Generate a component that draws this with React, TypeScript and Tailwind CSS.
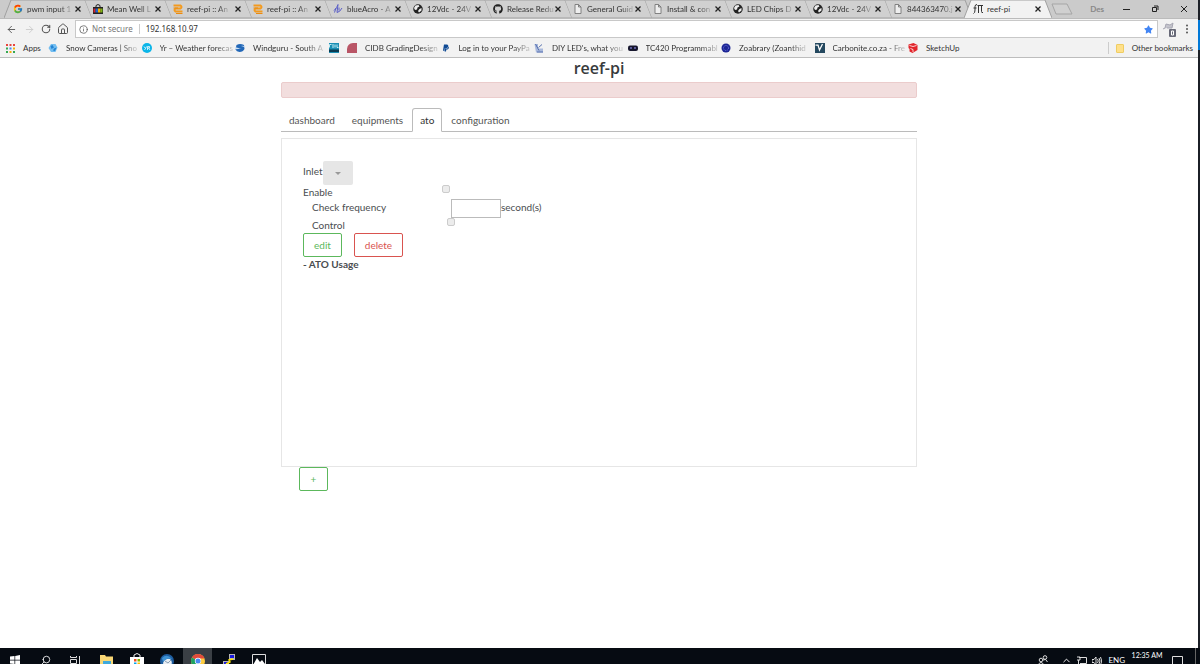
import React, { useState } from 'react';
import { FcGoogle } from 'react-icons/fc';
import { FaGithub, FaPaypal, FaStar } from 'react-icons/fa';
import { ArrowLeft, ArrowRight, ChevronUp, House, Info, RotateCw, Search } from 'lucide-react';

interface BrowserTab {
  title: string;
  icon: React.ReactNode;
}

interface Bookmark {
  title: string;
  icon: React.ReactNode;
}

const GlobeIcon = () => (
  <svg viewBox="0 0 20 20" className="size-full">
    <circle cx="10" cy="10" r="9.5" fill="#222" />
    <path d="M5 3 L11 2 L13 5 L9 7 L8 11 L4 12 L2 8 Z M13 10 L17 8 L17 13 L12 17 L10 14 Z" fill="#eee" />
  </svg>
);

const FileIcon = () => (
  <svg viewBox="0 0 20 20" className="size-full" fill="#eee" stroke="#777" strokeWidth="1.8">
    <path d="M4 1 H11 L16 6 V19 H4 Z M11 1 V6 H16" />
  </svg>
);

const ShopIcon = () => (
  <svg viewBox="0 0 20 20" className="size-full">
    <path d="M6 7 V3 Q10 -1 14 3 V7" fill="none" stroke="#222" strokeWidth="2" />
    <path d="M0 6 H20 V20 H0 Z" fill="#222" />
    <path d="M1 9 H5 V17 H1 Z" fill="#d92027" />
    <path d="M5 9 H10 V17 H5 Z" fill="#2062c9" />
    <path d="M10 9 H15 V17 H10 Z" fill="#f5af02" />
    <path d="M15 9 H19 V17 H15 Z" fill="#7cb518" />
  </svg>
);

const ReefDocsIcon = () => (
  <svg viewBox="0 0 20 20" className="size-full" fill="none">
    <path d="M1 3 H15 Q19 6 15 9 H5 Q1 12 5 15 H19" stroke="#f39a1e" strokeWidth="4" />
    <path d="M1 8 H10 M6 19 H19" stroke="#e98a10" strokeWidth="2" />
  </svg>
);

const AcroIcon = () => (
  <svg viewBox="0 0 20 20" className="size-full" fill="none" stroke="#5b5fc7" strokeWidth="2">
    <path d="M2 13 Q8 8 10 1 L8 17 Q14 16 18 8 M3 17 L6 8 M12 7 L12 13" />
  </svg>
);

const PiIcon = () => (
  <svg viewBox="0 0 20 20" className="size-full" fill="none" stroke="#333" strokeWidth="2">
    <path d="M1 19 Q4 18 4 12 V5 Q4 1 8 1 M1 8 H7 M9 3 H20 M11 3 V18 M17 3 V15 Q17 18 20 17" />
  </svg>
);

const BROWSER_TABS: BrowserTab[] = [
  { title: 'pwm input 1', icon: <FcGoogle className="size-full" /> },
  { title: 'Mean Well L', icon: <ShopIcon /> },
  { title: 'reef-pi :: An', icon: <ReefDocsIcon /> },
  { title: 'reef-pi :: An', icon: <ReefDocsIcon /> },
  { title: 'blueAcro - A', icon: <AcroIcon /> },
  { title: '12Vdc - 24V', icon: <GlobeIcon /> },
  { title: 'Release Redu', icon: <FaGithub className="size-full text-[#222]" /> },
  { title: 'General Guid', icon: <FileIcon /> },
  { title: 'Install & con', icon: <FileIcon /> },
  { title: 'LED Chips D', icon: <GlobeIcon /> },
  { title: '12Vdc - 24V', icon: <GlobeIcon /> },
  { title: '844363470.j', icon: <FileIcon /> },
  { title: 'reef-pi', icon: <PiIcon /> },
];

const BOOKMARKS: Bookmark[] = [
  {
    title: 'Snow Cameras | Sno',
    icon: (
      <svg viewBox="0 0 20 20" className="size-full">
        <path d="M6 2 L15 2 L19 9 L15 18 L6 18 L1 10 Z" fill="#72bdf0" />
        <path d="M5 6 L9 4 L12 9 L7 12 Z M12 11 L17 9 L14 16 L10 15 Z" fill="#2383d3" />
      </svg>
    ),
  },
  {
    title: 'Yr – Weather forecas',
    icon: (
      <svg viewBox="0 0 20 20" className="size-full">
        <circle cx="10" cy="10" r="10" fill="#0bb5e8" />
        <path d="M4 7 L7 11 L9 7 M7 11 L5 14 M11 14 V7 H15 V10 H11 M13 10 L16 14" fill="none" stroke="#fff" strokeWidth="1.5" />
      </svg>
    ),
  },
  {
    title: 'Windguru - South A',
    icon: (
      <svg viewBox="0 0 20 20" className="size-full">
        <path d="M3 4 Q10 0 18 4 L19 12 Q16 18 9 18 Q3 17 1 13 Z" fill="#2368b8" />
        <path d="M0 8 Q6 11 13 10 Q7 13 0 12 Z M12 6 Q16 6 20 9 V7 Q17 5 12 6" fill="#cfe1f4" />
      </svg>
    ),
  },
  {
    title: '',
    icon: (
      <svg viewBox="0 0 20 20" className="size-full">
        <path d="M0 0 H20 V20 H0 Z" fill="#1b8fb4" />
        <path d="M1 9 V3 H5 M8 2 V10 M12 9 V3 M16 3 V9 H19" fill="none" stroke="#c6eef7" strokeWidth="2" />
        <path d="M0 13 H20 V18 H0 Z" fill="#0b3b52" />
      </svg>
    ),
  },
  {
    title: 'CIDB GradingDesign',
    icon: (
      <svg viewBox="0 0 20 20" className="size-full">
        <path d="M0 20 V12 Q1 1 12 0 H20 V20 Z" fill="#b95566" />
      </svg>
    ),
  },
  { title: 'Log in to your PayPa', icon: <FaPaypal className="size-full p-px text-[#0f4a94]" /> },
  {
    title: "DIY LED's, what you",
    icon: (
      <svg viewBox="0 0 20 20" className="size-full">
        <path d="M1 2 H8 V11 H18 V19 H4 Z" fill="#a9b9dc" />
        <path d="M3 2 L10 15 M9 9 L16 3 M6 18 H18" stroke="#4965a8" strokeWidth="1.8" />
      </svg>
    ),
  },
  {
    title: 'TC420 Programmabl',
    icon: (
      <svg viewBox="0 0 20 20" className="size-full">
        <rect y="5" width="20" height="11" rx="4" fill="#17172e" />
        <path d="M4 10 H8 M12 10 H16" stroke="#7373bd" strokeWidth="3" />
      </svg>
    ),
  },
  {
    title: 'Zoabrary (Zoanthid',
    icon: (
      <svg viewBox="0 0 20 20" className="size-full">
        <circle cx="10" cy="10" r="9" fill="#1c2595" />
        <circle cx="10" cy="10" r="5" fill="none" stroke="#707ae0" strokeWidth="2" strokeDasharray="2 2" />
      </svg>
    ),
  },
  {
    title: 'Carbonite.co.za - Fre',
    icon: (
      <svg viewBox="0 0 20 20" className="size-full">
        <path d="M0 0 H20 V20 H0 Z" fill="#24485f" />
        <path d="M1 4 H6 L9 14 L15 2" fill="none" stroke="#fff" strokeWidth="2.5" />
      </svg>
    ),
  },
  {
    title: 'SketchUp',
    icon: (
      <svg viewBox="0 0 20 20" className="size-full">
        <path d="M1 3 L11 0 L19 4 V14 L9 20 L3 17 V12 L1 10 Z" fill="#e2252b" />
        <path d="M3 5 L10 7 L17 5 M5 11 L10 13 V18" fill="none" stroke="#fff" strokeWidth="1.6" />
      </svg>
    ),
  },
];

const FADE = 'whitespace-nowrap [mask-image:linear-gradient(to_right,black_75%,rgb(0_0_0/0.2))]';

// Each tab overlaps the one to its right, the active one lies over both neighbours
const tabShape = (index: number, active: boolean) => {
  if (active) return 'M0 18 L7 0 H81 L88 18';
  return index === 0 ? 'M0 18 L7 0 H81 L88 18' : 'M1 0 H81 L88 18 H8';
};

const TabStrip = () => (
  <div className="flex h-[18px] shrink-0 items-stretch bg-[#cbcbcb] pl-1">
    {BROWSER_TABS.map((tab, i) => {
      const active = i === BROWSER_TABS.length - 1;
      return (
        <div key={i} className="relative flex w-20 shrink-0 items-center pl-[9px]">
          <svg
            className={`absolute top-0 left-0 h-[18px] w-[88px] ${active ? 'z-10' : ''}`}
            viewBox="0 0 88 18"
            preserveAspectRatio="none"
          >
            <path d={tabShape(i, active)} fill={active ? '#f2f2f2' : '#d0d0d0'} stroke="#a0a0a0" />
          </svg>
          <span className="z-20 size-[10px] shrink-0">{tab.icon}</span>
          <span className="z-20 ml-1 w-[42px]">
            <span className={active ? '' : FADE}>{tab.title}</span>
          </span>
          <button aria-label="Close tab" className="z-20 ml-[6px] size-[6px]">
            <svg viewBox="0 0 6 6" stroke="#222" strokeWidth="1.3">
              <path d="M.5 .5 L5.5 5.5 M5.5 .5 L.5 5.5" />
            </svg>
          </button>
        </div>
      );
    })}
    <button aria-label="New tab" className="ml-[6px] w-6">
      <svg viewBox="0 0 24 18" fill="#d0d0d0" stroke="#a5a5a5">
        <path d="M2 4 H17 L22 14 H6 Z" />
      </svg>
    </button>
    <div className="ml-auto flex items-center text-[#222]">
      <span className="mr-[18px] font-bold text-[#888]">Des</span>
      <button aria-label="Minimize" className="mr-[21px]">
        <svg className="size-2" viewBox="0 0 8 8" stroke="currentColor"><path d="M1 4.500 H8" /></svg>
      </button>
      <button aria-label="Restore" className="mr-[21px]">
        <svg className="size-2" viewBox="0 0 8 8" fill="none" stroke="currentColor">
          <path d="M1.500 2.500 H5.500 V6.500 H1.500 Z M3 1 H7 V5" />
        </svg>
      </button>
      <button aria-label="Close" className="mr-[10px]">
        <svg className="size-2" viewBox="0 0 8 8" stroke="currentColor"><path d="M1 1 L7 7 M7 1 L1 7" /></svg>
      </button>
    </div>
  </div>
);

const Toolbar = () => (
  <div className="flex h-[21px] shrink-0 items-center border-t border-[#bbb] bg-[#f2f2f2] font-['Noto_Sans','Open_Sans',sans-serif] text-[#555]">
    <button aria-label="Back" className="ml-[6px]"><ArrowLeft size={11} /></button>
    <button aria-label="Forward" className="ml-[7px] text-[#ccc]"><ArrowRight size={11} /></button>
    <button aria-label="Reload" className="ml-[6px]"><RotateCw size={10} strokeWidth={2.5} /></button>
    <button aria-label="Home" className="ml-[6px]"><House size={12} /></button>
    <div className="ml-[6px] flex h-[18px] flex-1 items-center border border-[#c8c8c8] bg-white pr-1 pl-[3px]">
      <Info size={9} />
      <label htmlFor="address" className="ml-1 text-[#777]">Not secure</label>
      <span className="mx-[6px] h-[10px] w-px bg-[#ccc]" />
      <input id="address" defaultValue="192.168.10.97" className="min-w-0 flex-1 text-[#333] outline-none" />
      <button aria-label="Bookmark page"><FaStar size={9} className="text-[#4285f4]" /></button>
    </div>
    <button aria-label="Extension" className="ml-1">
      <svg className="h-4 w-[15px]" viewBox="0 0 15 16">
        <path d="M1 8 L3 7 L4 3 L8 4 L11 2 L10 7 L5 7" fill="#c4c4cc" stroke="#a6a6b2" />
        <rect x="7" y="8" width="7" height="8" rx="1" fill="#686a78" />
        <path d="M9.500 10 H11.500 V14 H9.500 Z" fill="none" stroke="#fff" />
      </svg>
    </button>
    <button aria-label="Menu" className="mr-[9px] ml-[8px]">
      <svg className="h-[10px] w-1" viewBox="0 0 4 10" fill="#555">
        <circle cx="2" cy="1.500" r="1" />
        <circle cx="2" cy="5" r="1" />
        <circle cx="2" cy="8.500" r="1" />
      </svg>
    </button>
  </div>
);

const BookmarksBar = () => (
  <div className="flex h-[19px] shrink-0 items-center border-b border-[#bdbdbd] bg-[#f2f2f2] pl-[6px]">
    <a href="#apps" className="flex w-[42px] shrink-0 items-center gap-2">
      <svg className="size-[9px]" viewBox="0 0 9 9">
        <path d="M0 0 H2 V2 H0 Z M3.500 0 H5.500 V2 H3.500 Z M7 0 H9 V2 H7 Z" fill="#e8453c" />
        <path d="M0 3.500 H2 V5.500 H0 Z M7 7 H9 V9 H7 Z" fill="#34a853" />
        <path d="M3.500 3.500 H5.500 V5.500 H3.500 Z" fill="#4285f4" />
        <path d="M7 3.500 H9 V5.500 H7 Z M3.500 7 H5.500 V9 H3.500 Z" fill="#f5ae09" />
        <path d="M0 7 H2 V9 H0 Z" fill="#34a853" />
      </svg>
      Apps
    </a>
    <div className="flex w-[945px] items-center justify-between">
      {BOOKMARKS.map((b, i) => (
        <a key={i} href="#bookmark" className="flex shrink-0 items-center gap-2">
          <span className="size-[10px]">{b.icon}</span>
          {b.title && (
            <span className="w-[67px]">
              <span className={b.title === 'SketchUp' ? '' : FADE}>{b.title}</span>
            </span>
          )}
        </a>
      ))}
    </div>
    <a href="#other" className="mr-[5px] ml-auto flex shrink-0 items-center gap-2 border-l border-[#ccc] pl-[7px]">
      <span className="h-[9px] w-2 rounded-[1px] border border-[#efcd62] bg-[#ffe08a]" />
      Other bookmarks
    </a>
  </div>
);

const SECTIONS = ['dashboard', 'equipments', 'ato', 'configuration'];

const CHECKBOX = 'size-2 appearance-none rounded-[2px] border border-[#ccc] bg-[#ececec] checked:bg-[#888]';

const AtoForm = () => (
  <div className="flex min-h-[329px] flex-col border border-[#e6e6e6] px-[21px] pt-[22px] leading-[14px]">
    <div className="flex h-6 items-start">
      <span className="leading-5">Inlet</span>
      <button aria-label="Select inlet" className="flex h-6 w-[30px] items-center justify-center rounded-[2px] bg-[#e6e6e6]">
        <svg className="mt-px h-[3px] w-[6px]" viewBox="0 0 6 3" fill="#999"><path d="M0 0 H6 L3 3 Z" /></svg>
      </button>
    </div>
    <div className="flex h-[14px]">
      <label htmlFor="enable" className="w-[139px]">Enable</label>
      <input id="enable" type="checkbox" className={CHECKBOX} />
    </div>
    <div className="flex h-[19px] pl-[9px]">
      <label htmlFor="frequency" className="w-[139px] leading-4">Check frequency</label>
      <input id="frequency" type="text" className="h-[19px] w-[50px] border border-[#bbb] px-1 outline-none" />
      <span className="leading-4">second(s)</span>
    </div>
    <div className="flex h-[15px] pl-[9px]">
      <label htmlFor="control" className="w-[135px]">Control</label>
      <input id="control" type="checkbox" className={CHECKBOX} />
    </div>
    <div className="flex gap-3">
      <button className="h-6 w-[39px] rounded-[2px] border border-[#5cb85c] text-[#5cb85c]">edit</button>
      <button className="h-6 w-[49px] rounded-[2px] border border-[#d9534f] text-[#d9534f]">delete</button>
    </div>
    <div className="font-bold">- ATO Usage</div>
  </div>
);

const ReefPi = () => {
  const [section, setSection] = useState('ato');

  return (
    <main className="min-h-0 flex-1 overflow-hidden bg-white text-[10px] leading-4 text-[#4a4d50]">
      <div className="mx-auto max-w-[636px]">
        <h1 className="pb-1 text-center font-['Open_Sans','Noto_Sans',sans-serif] text-base leading-5 font-semibold text-[#373a3c]">
          reef-pi
        </h1>
        <div role="alert" className="h-4 rounded-[2px] border border-[#ebcccc] bg-[#f2dede]" />
        <nav className="mt-[10px] mb-[6px] flex gap-px border-b border-[#bbb]">
          {SECTIONS.map(s => (
            <button
              key={s}
              onClick={() => setSection(s)}
              className={`-mb-px h-6 rounded-t-[3px] border px-[7px] ${
                s === section ? 'border-[#bbb] border-b-white bg-white text-[#333]' : 'border-transparent text-[#555]'
              }`}
            >
              {s}
            </button>
          ))}
        </nav>
        <AtoForm />
        <button aria-label="Add" className="ml-[18px] block h-6 w-[29px] rounded-[2px] border border-[#5cb85c] text-[#5cb85c]">
          +
        </button>
      </div>
    </main>
  );
};

const Taskbar = () => (
  <footer className="flex h-4 shrink-0 items-start overflow-hidden bg-[#060b12] text-white">
    <button aria-label="Start" className="mt-[7px] ml-[10px]">
      <svg className="size-[10px]" viewBox="0 0 10 10" fill="#fff">
        <path d="M0 1.500 L4.500 1 V4.700 H0 Z M5.200 .9 L10 0 V4.700 H5.200 Z M0 5.400 H4.500 V9 L0 8.500 Z M5.200 5.400 H10 V10 L5.200 9 Z" />
      </svg>
    </button>
    <button aria-label="Search" className="mt-[7px] ml-[21px]"><Search size={10} className="-scale-x-100" /></button>
    <button aria-label="Task view" className="mt-2 ml-[19px]">
      <svg className="size-[10px]" viewBox="0 0 10 10" fill="none" stroke="#ddd">
        <path d="M.5 0 V1.500 H6.500 V0 M.5 3.500 H6.500 V7.500 H.5 Z M.5 10 V9 H6.500 V10 M9.500 0 V10" />
      </svg>
    </button>
    <button aria-label="File Explorer" className="mt-[7px] ml-5">
      <svg className="h-3 w-[13px]" viewBox="0 0 13 12">
        <path d="M0 0 H5 L6 1.500 H13 V12 H0 Z" fill="#f8d775" />
        <path d="M3 6 H11 V12 H3 Z" fill="#3fa9dc" />
        <path d="M5 9 H9 V12 H5 Z" fill="#f8d775" />
      </svg>
    </button>
    <button aria-label="Store" className="mt-[5px] ml-[17px]">
      <svg className="size-[14px]" viewBox="0 0 14 14">
        <path d="M4 4 V2 Q7 -1 10 2 V4" fill="none" stroke="#eee" />
        <path d="M0 4 H14 V14 H0 Z" fill="#fff" />
        <path d="M4 6 H6.500 V8.500 H4 Z" fill="#f25022" />
        <path d="M7.500 6 H10 V8.500 H7.500 Z" fill="#7fba00" />
        <path d="M4 9.500 H6.500 V12 H4 Z" fill="#00a4ef" />
        <path d="M7.500 9.500 H10 V12 H7.500 Z" fill="#ffb900" />
      </svg>
    </button>
    <button aria-label="Thunderbird" className="mt-[6px] ml-4">
      <svg className="size-[14px]" viewBox="0 0 14 14">
        <circle cx="7" cy="7" r="7" fill="#1d5c9f" />
        <path d="M3 9 Q5 4 10 5 Q13 7 11 12 H4 Z" fill="#e8edf2" />
        <path d="M5 7 L8 9 L11 6" fill="none" stroke="#8aa0b5" />
        <path d="M2 4 Q7 -1 12 5 Q7 3 3 8 Z" fill="#3f93d4" />
      </svg>
    </button>
    <button aria-label="Chrome" className="ml-[9px] flex h-10 w-[29px] justify-center bg-[#3a3f45] pt-[6px]">
      <svg className="size-[14px]" viewBox="0 0 14 14">
        <circle cx="7" cy="7" r="7" fill="#ffcd40" />
        <path d="M7 7 L1 3.500 A7 7 0 0 1 13.500 4.500 H7 Z" fill="#e24a3b" />
        <path d="M7 7 L1 3.500 A7 7 0 0 0 6.500 14 L9 8 Z" fill="#1da362" />
        <circle cx="7" cy="7" r="3.200" fill="#fff" />
        <circle cx="7" cy="7" r="2.500" fill="#4a8af4" />
      </svg>
    </button>
    <button aria-label="PuTTY" className="mt-[6px] ml-[11px]">
      <svg className="size-[13px]" viewBox="0 0 13 13">
        <path d="M6 0 H12 V6 H6 Z M0 7 H6 V13 H0 Z" fill="#b5b5b5" />
        <path d="M7 1 H11 V4 H7 Z M1 8 H5 V11 H1 Z" fill="#1717dc" />
        <path d="M10 5 L6 6 L7 8 L3 10" fill="none" stroke="#ffe500" strokeWidth="1.5" />
      </svg>
    </button>
    <button aria-label="Photos" className="mt-[6px] ml-4">
      <svg className="size-[14px]" viewBox="0 0 14 14">
        <path d="M.5 .5 H13.500 V13.500 H.5 Z" fill="none" stroke="#ddd" />
        <path d="M1 11 L5 4 L8 8 L10 6 L13 10 V14 H1 Z" fill="#fff" />
      </svg>
    </button>
    <div className="ml-auto flex items-start">
      <svg className="mt-[7px] size-[10px]" viewBox="0 0 10 10" fill="none" stroke="#ddd">
        <circle cx="7" cy="2.500" r="1.800" />
        <circle cx="3" cy="5" r="1.800" />
        <path d="M0 10 Q3 5 6 10 M5 5 Q8 3 9.500 7" />
      </svg>
      <ChevronUp size={11} className="mt-[7px] ml-[13px]" />
      <svg className="mt-2 ml-[5px] size-[10px]" viewBox="0 0 10 10" fill="none" stroke="#ddd">
        <path d="M2 1.500 H9.500 V7.500 H3 M0 1 H3 V4 H0 M1.500 4 V9.500 H7" />
      </svg>
      <svg className="mt-2 ml-[5px] size-[10px]" viewBox="0 0 10 10" fill="none" stroke="#ddd">
        <path d="M0 3.500 H2 L4 1 V9 L2 6.500 H0 Z M5.500 3 Q7 5 5.500 7 M7 2 Q9 5 7 8 M8.500 1 Q11 5 8.500 9" />
      </svg>
      <span className="mt-[7px] ml-[6px] leading-[10px]">ENG</span>
      <time className="mt-[3px] ml-[6px] w-8 text-center text-[7px] leading-[9px] whitespace-nowrap">12:35 AM</time>
      <svg className="mt-2 ml-[9px] size-[11px]" viewBox="0 0 11 11" fill="none" stroke="#ddd">
        <path d="M.5 .5 H10.500 V8.500 H7 L5 10.500 V8.500 H.5 Z" />
      </svg>
      <span className="ml-3 h-4 w-px bg-[#666]" />
      <span className="w-1" />
    </div>
  </footer>
);

const App: React.FC = () => {
  return (
    <div className="flex h-screen flex-col overflow-hidden bg-white font-['Lato','Open_Sans',sans-serif] text-[8px] leading-3 text-[#333]">
      <div className="flex min-h-0 flex-1">
        <div className="flex min-w-0 flex-1 flex-col">
          <TabStrip />
          <Toolbar />
          <BookmarksBar />
          <ReefPi />
        </div>
        {/* Sliver of the desktop behind the window */}
        <div className="flex w-[2px] flex-col bg-[#1b1f26]">
          <span className="mt-5 h-[30px] bg-[#0078d7]" />
        </div>
      </div>
      <Taskbar />
    </div>
  );
};

export default App;
